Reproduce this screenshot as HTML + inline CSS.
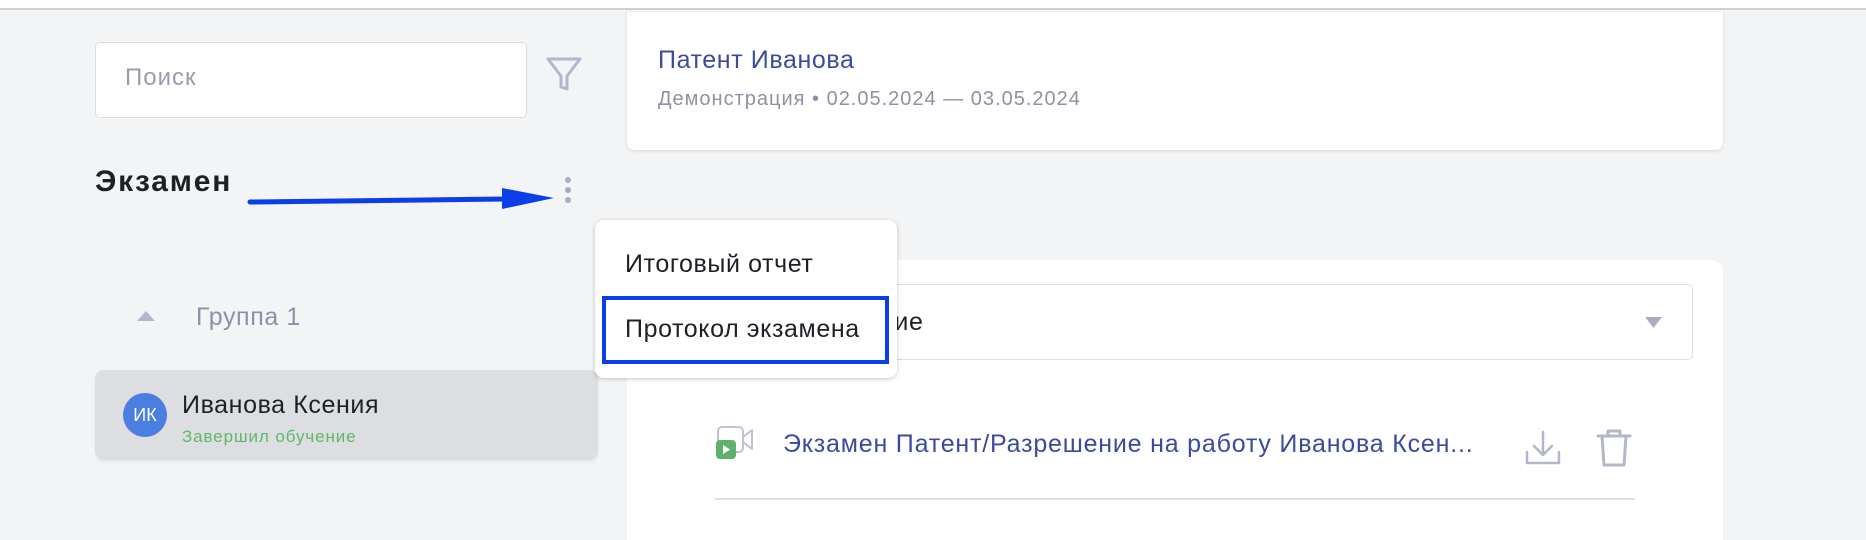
<!DOCTYPE html>
<html><head><meta charset="utf-8"><style>
*{margin:0;padding:0;box-sizing:border-box}
body{width:1866px;height:534px;overflow:hidden;background:#f3f4f6;font-family:"Liberation Sans",sans-serif;position:relative}
.a{position:absolute;white-space:nowrap}
.t{font-size:25px;letter-spacing:0.6px}
</style></head><body>
<div class="a" style="left:0;top:0;width:1866px;height:10px;background:#fff;border-bottom:2px solid #cfd0d2"></div>
<div class="a" style="left:627px;top:12px;width:1096px;height:522px;background:#f3f4f6"></div>
<div class="a" style="left:95px;top:42px;width:432px;height:76px;background:#fff;border:1px solid #dcdde0;border-radius:5px"></div>
<div class="a" style="left:125px;top:63px;font-size:24px;letter-spacing:1px;color:#9a9cae;line-height:30px">Поиск</div>
<svg class="a" style="left:545px;top:56px" width="38" height="36" viewBox="0 0 38 36"><path d="M3 3H35L22 20V33L16 31V20Z" fill="none" stroke="#b3b6cd" stroke-width="3" stroke-linejoin="round"/></svg>
<div class="a" style="left:95px;top:164px;font-size:30px;letter-spacing:1.8px;font-weight:bold;color:#1f2025;line-height:36px">Экзамен</div>
<div class="a" style="left:565px;top:177px;width:6px;height:6px;border-radius:3px;background:#a9adc2"></div>
<div class="a" style="left:565px;top:187px;width:6px;height:6px;border-radius:3px;background:#a9adc2"></div>
<div class="a" style="left:565px;top:197px;width:6px;height:6px;border-radius:3px;background:#a9adc2"></div>
<svg class="a" style="left:240px;top:180px" width="330" height="40" viewBox="0 0 330 40"><path d="M10 22L265 19" stroke="#0a3ee8" stroke-width="5" stroke-linecap="round"/><path d="M262 8L314 18L262 29Z" fill="#0a3ee8"/></svg>
<svg class="a" style="left:137px;top:311px" width="18" height="11"><path d="M9 0L18 10H0Z" fill="#b3b6cd"/></svg>
<div class="a t" style="left:196px;top:302px;color:#8e90a6;line-height:30px">Группа 1</div>
<div class="a" style="left:95px;top:370px;width:503px;height:90px;background:#dcdee2;border-radius:9px;box-shadow:0 2px 3px rgba(0,0,0,.06)"></div>
<div class="a" style="left:123px;top:393px;width:44px;height:44px;border-radius:22px;background:#4a7fe0;color:#fff;font-size:18px;line-height:44px;text-align:center">ИК</div>
<div class="a t" style="left:182px;top:390px;color:#1f2025;line-height:30px">Иванова Ксения</div>
<div class="a" style="left:182px;top:427px;font-size:17px;letter-spacing:0.9px;color:#5fb865;line-height:20px">Завершил обучение</div>
<div class="a" style="left:627px;top:12px;width:1096px;height:138px;background:#fff;border-radius:0 0 7px 7px;box-shadow:0 1px 3px rgba(0,0,0,.12)"></div>
<div class="a t" style="left:658px;top:45px;color:#3b4aa0;line-height:30px">Патент Иванова</div>
<div class="a" style="left:658px;top:86px;font-size:20px;letter-spacing:1px;color:#8e90a6;line-height:26px">Демонстрация • 02.05.2024 — 03.05.2024</div>
<div class="a" style="left:627px;top:260px;width:1096px;height:280px;background:#fff;border-radius:0 12px 0 0"></div>
<div class="a" style="left:660px;top:284px;width:1033px;height:76px;border:1px solid #dcdde0;border-radius:5px;background:#fff"></div>
<div class="a t" style="left:880px;top:307px;color:#1f2025;line-height:30px">ние</div>
<svg class="a" style="left:1645px;top:317px" width="17" height="11"><path d="M0 0H17L8.5 11Z" fill="#a9adc2"/></svg>
<svg class="a" style="left:714px;top:425px" width="42" height="36" viewBox="0 0 42 36"><rect x="4" y="2" width="25" height="25" rx="4" fill="none" stroke="#c0c3d6" stroke-width="2"/><path d="M29 12L38 5V24L29 17" fill="none" stroke="#c0c3d6" stroke-width="2" stroke-linejoin="round"/><rect x="2" y="15" width="20" height="19" rx="4" fill="#5fb06a"/><path d="M9 20L16 24.5L9 29Z" fill="#fff"/></svg>
<div class="a" style="left:783px;top:429px;font-size:25px;letter-spacing:0.8px;color:#3b4aa0;line-height:30px">Экзамен Патент/Разрешение на работу Иванова Ксен...</div>
<svg class="a" style="left:1524px;top:430px" width="38" height="36" viewBox="0 0 38 36"><path d="M19 2V24M10 16L19 25L28 16M3 22V33H35V22" fill="none" stroke="#b3b6cd" stroke-width="2.5" stroke-linecap="round" stroke-linejoin="round"/></svg>
<svg class="a" style="left:1595px;top:427px" width="38" height="42" viewBox="0 0 38 42"><path d="M3 9H35M13 9V4H25V9M7 9L9 38H29L31 9" fill="none" stroke="#b3b6cd" stroke-width="3" stroke-linecap="round" stroke-linejoin="round"/></svg>
<div class="a" style="left:715px;top:498px;width:920px;height:2px;background:#dcdee2"></div>
<div class="a" style="left:595px;top:220px;width:302px;height:158px;background:#fff;border-radius:9px;box-shadow:0 1px 5px rgba(0,0,0,.22)"></div>
<div class="a t" style="left:625px;top:249px;color:#1f2025;line-height:30px">Итоговый отчет</div>
<div class="a" style="left:602px;top:296px;width:287px;height:68px;border:4px solid #0a3ee8"></div>
<div class="a t" style="left:625px;top:314px;color:#1f2025;line-height:30px">Протокол экзамена</div>
</body></html>
